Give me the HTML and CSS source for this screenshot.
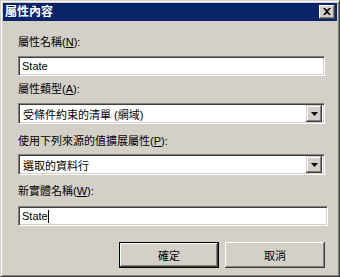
FILE: index.html
```html
<!DOCTYPE html>
<html>
<head>
	<meta charset="utf-8">
	<title>屬性內容</title>
	<link rel="stylesheet" href="styles.css">
</head>
<body>
	<div class="window">
		<div class="caption">
			<span class="caption-text">屬性內容</span>
			<button class="close-btn">
				<svg width="8" height="7" viewBox="0 0 8 7"><path d="M0 0h2l2 2 2-2h2L5 3.5 8 7H6L4 5 2 7H0l3-3.5z" fill="#000"/></svg>
			</button>
		</div>
		<div class="content">
			<label class="field-label l1">屬性名稱(<u>N</u>):</label>
			<div class="textbox">State</div>

			<label class="field-label l2">屬性類型(<u>A</u>):</label>
			<div class="combo">
				<span class="combo-text">受條件約束的清單 (網域)</span>
				<span class="combo-btn"><svg width="7" height="4" viewBox="0 0 7 4"><path d="M0 0h7L3.5 4z" fill="#000"/></svg></span>
			</div>

			<label class="field-label l3">使用下列來源的值擴展屬性(<u>P</u>):</label>
			<div class="combo">
				<span class="combo-text">選取的資料行</span>
				<span class="combo-btn"><svg width="7" height="4" viewBox="0 0 7 4"><path d="M0 0h7L3.5 4z" fill="#000"/></svg></span>
			</div>

			<label class="field-label l4">新實體名稱(<u>W</u>):</label>
			<div class="textbox wide">State<span class="caret"></span></div>

			<div class="buttons">
				<button class="btn default">確定</button>
				<button class="btn">取消</button>
			</div>
		</div>
	</div>
</body>
</html>
```

FILE: styles.css
```css
* {
	padding: 0;
	margin: 0;
	box-sizing: border-box;
}
html, body {
	width: 340px;
	height: 277px;
	overflow: hidden;
	background: #d4d0c8;
	font-family: "Liberation Sans", "Noto Sans CJK TC", sans-serif;
	font-size: 11px;
	color: #000;
}
.window {
	width: 340px;
	height: 277px;
	background: #d4d0c8;
	border-top: 1px solid #d4d0c8;
	border-left: 1px solid #d4d0c8;
	border-right: 1px solid #404040;
	border-bottom: 1px solid #404040;
	box-shadow: inset 1px 1px 0 #fff, inset -1px -1px 0 #808080;
	padding: 2px;
}
.caption {
	height: 18px;
	background: #0a246a;
	display: flex;
	align-items: center;
	justify-content: space-between;
	padding: 0 2px 0 2px;
}
.caption-text {
	color: #fff;
	font-weight: bold;
	font-size: 12px;
	line-height: 14px;
}
.close-btn {
	width: 16px;
	height: 14px;
	background: #d4d0c8;
	border: none;
	box-shadow: inset -1px -1px 0 #404040, inset 1px 1px 0 #fff, inset -2px -2px 0 #808080;
	display: flex;
	align-items: center;
	justify-content: center;
	padding: 0 1px 1px 0;
}
.content {
	padding: 0 11px 0 15px;
	display: flex;
	flex-direction: column;
	align-items: flex-start;
}
.field-label {
	display: block;
	line-height: 13px;
	height: 13px;
	margin-bottom: 7px;
}
.field-label u {
	text-decoration: underline;
}
.l1 { margin-top: 15px; }
.l2 { margin-top: 7px; }
.l3 { margin-top: 11px; margin-bottom: 6px; }
.l4 { margin-top: 10px; margin-bottom: 8px; }
.textbox {
	width: 307px;
	height: 20px;
	background: #fff;
	border-top: 1px solid #808080;
	border-left: 1px solid #808080;
	border-right: 1px solid #fff;
	border-bottom: 1px solid #fff;
	box-shadow: inset 1px 1px 0 #404040, inset -1px -1px 0 #d4d0c8;
	padding: 0 3px;
	line-height: 18px;
	display: flex;
	align-items: center;
}
.textbox.wide {
	width: 310px;
}
.caret {
	display: inline-block;
	width: 1px;
	height: 13px;
	background: #000;
}
.combo {
	width: 307px;
	height: 21px;
	background: #fff;
	border-top: 1px solid #808080;
	border-left: 1px solid #808080;
	border-right: 1px solid #fff;
	border-bottom: 1px solid #fff;
	box-shadow: inset 1px 1px 0 #404040, inset -1px -1px 0 #d4d0c8;
	display: flex;
	align-items: center;
	justify-content: space-between;
	padding: 2px 2px 2px 4px;
}
.combo-btn {
	width: 16px;
	height: 17px;
	background: #d4d0c8;
	box-shadow: inset -1px -1px 0 #404040, inset 1px 1px 0 #d4d0c8, inset -2px -2px 0 #808080, inset 2px 2px 0 #fff;
	display: flex;
	align-items: center;
	justify-content: center;
}
.buttons {
	align-self: stretch;
	display: flex;
	justify-content: flex-end;
	gap: 6px;
	margin-top: 16px;
	padding-right: 1px;
}
.btn {
	width: 100px;
	height: 26px;
	background: #d4d0c8;
	border: none;
	font-family: "Liberation Sans", "Noto Sans CJK TC", sans-serif;
	font-size: 11px;
	box-shadow: inset -1px -1px 0 #404040, inset 1px 1px 0 #fff, inset -2px -2px 0 #808080;
}
.btn.default {
	border: 1px solid #000;
	box-shadow: inset -1px -1px 0 #404040, inset 1px 1px 0 #fff, inset -2px -2px 0 #808080;
}
```
